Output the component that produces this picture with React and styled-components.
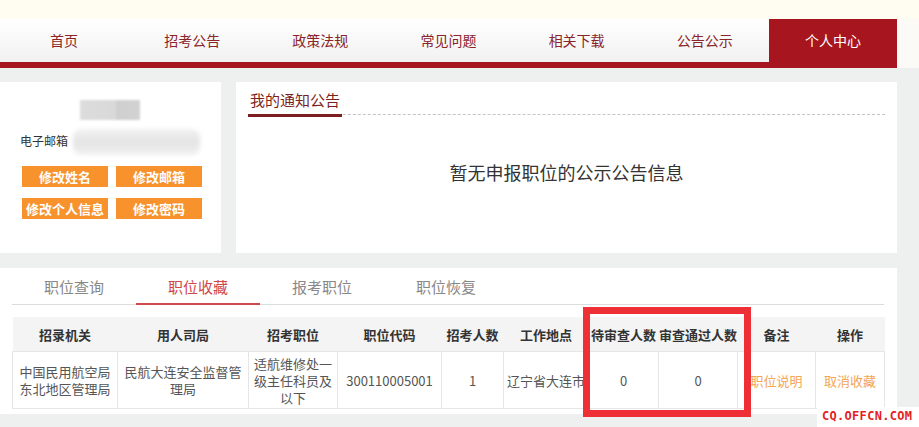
import React from 'react';
import styled, { createGlobalStyle } from 'styled-components';

const GlobalStyle = createGlobalStyle`
    html, body {
        margin: 0;
        padding: 0;
        background: #eeefef;
    }
    body {
        font-family: "Noto Sans CJK SC", "Noto Sans", sans-serif;
    }
`

const Page = styled.div`
    position: relative;
    width: 919px;
    height: 427px;
    overflow: hidden;
    background: #eeefef;
`

const TopStrip = styled.div`
    height: 19px;
    background: #fffcf1;
`

const NavRow = styled.div`
    display: flex;
    background: #fbfaf6;
`

const Nav = styled.ul`
    display: flex;
    width: 897px;
    margin: 0;
    padding: 0;
    list-style: none;
    background: linear-gradient(#ffffff, #f1f1f1);
    border-bottom: 6px solid #a7161e;
`

const NavItem = styled.li`
    flex: 1;
    height: 43px;
    line-height: 43px;
    text-align: center;
    font-size: 14px;
    color: ${p => p.active ? '#ffffff' : '#8a2428'};
    background: ${p => p.active ? '#a7161e' : 'transparent'};
`

const Main = styled.div`
    width: 897px;
    padding-top: 14px;
`

const TopSection = styled.div`
    display: flex;
    gap: 15px;
    height: 171px;
`

const ProfileCard = styled.div`
    width: 221px;
    background: #fff;
    padding: 18px 0 0 20px;
    box-sizing: border-box;
`

const BlurName = styled.div`
    width: 60px;
    height: 20px;
    margin-left: 60px;
    background: linear-gradient(90deg, #dcdcdc 0%, #d9d9d9 60%, #cfcfcf 60%, #d2d2d2 100%);
    filter: blur(1px);
`

const EmailRow = styled.div`
    display: flex;
    align-items: center;
    height: 32px;
    margin-top: 6px;
`

const Label = styled.span`
    font-size: 12px;
    color: #333;
    margin-top: -4px;
`

const BlurEmail = styled.div`
    width: 127px;
    height: 26px;
    margin-left: 5px;
    border-radius: 8px;
    background: linear-gradient(#f2f2f2, #e4e4e4 50%, #f1f1f1);
    filter: blur(2px);
`

const ButtonGrid = styled.div`
    display: grid;
    grid-template-columns: 86px 86px;
    column-gap: 8px;
    row-gap: 11px;
    margin: 8px 0 0 2px;
`

const OrangeButton = styled.div`
    height: 21px;
    line-height: 21px;
    background: #f7922c;
    color: #fff;
    font-size: 13px;
    font-weight: bold;
    text-align: center;
`

const NoticeCard = styled.div`
    flex: 1;
    background: #fff;
    padding: 0 12px;
`

const NoticeHeader = styled.div`
    border-bottom: 1px dashed #c4c4c4;
    height: 32px;
`

const NoticeTitle = styled.span`
    display: inline-block;
    padding: 7px 2px 0 2px;
    height: 25px;
    font-size: 15px;
    color: #7d1f22;
    border-bottom: 3px solid #7d1f22;
`

const EmptyMessage = styled.div`
    margin-top: 45px;
    text-align: center;
    font-size: 18px;
    line-height: 24px;
    color: #333;
`

const BottomPanel = styled.div`
    position: relative;
    margin-top: 15px;
    background: #fff;
    padding: 0 13px 0 12px;
    height: 146px;
`

const Tabs = styled.div`
    display: flex;
    border-bottom: 1px solid #dcdcdc;
`

const Tab = styled.div`
    width: 124px;
    height: 37px;
    line-height: 37px;
    text-align: center;
    font-size: 15px;
    color: ${p => p.active ? '#d0484a' : '#888'};
    border-bottom: 2px solid ${p => p.active ? '#d0484a' : 'transparent'};
    margin-bottom: -1px;
    box-sizing: border-box;
`

const Table = styled.table`
    margin-top: 12px;
    width: 871px;
    table-layout: fixed;
    border-collapse: collapse;
    font-size: 13px;
`

const Th = styled.th`
    height: 34px;
    padding: 0;
    background: #f4f4f4;
    color: #333;
    font-weight: bold;
    white-space: nowrap;
    overflow: visible;
`

const Td = styled.td`
    height: 56px;
    padding: 0 3px;
    border: 1px solid #e6e6e6;
    text-align: ${p => p.left ? 'left' : 'center'};
    line-height: 17px;
    color: ${p => p.link ? '#f3a655' : '#555'};
    white-space: ${p => p.nowrap ? 'nowrap' : 'normal'};
    overflow: hidden;
`

const Highlight = styled.div`
    position: absolute;
    left: 583px;
    top: 39px;
    width: 168px;
    height: 110px;
    border: 7px solid #ee3036;
    box-sizing: border-box;
`

const Watermark = styled.div`
    position: absolute;
    right: 0;
    bottom: 0;
    width: 102px;
    height: 20px;
    background: #fff;
    color: #e31e24;
    font-family: "DejaVu Sans Mono", monospace;
    font-weight: bold;
    font-size: 12px;
    line-height: 18px;
    padding-left: 5px;
    box-sizing: border-box;
    letter-spacing: 0.3px;
`

const navItems = ['首页', '招考公告', '政策法规', '常见问题', '相关下载', '公告公示', '个人中心'];
const tabs = ['职位查询', '职位收藏', '报考职位', '职位恢复'];
const columns = [
    { title: '招录机关', width: 105 },
    { title: '用人司局', width: 131 },
    { title: '招考职位', width: 89 },
    { title: '职位代码', width: 104 },
    { title: '招考人数', width: 62 },
    { title: '工作地点', width: 85 },
    { title: '待审查人数', width: 70 },
    { title: '审查通过人数', width: 79 },
    { title: '备注', width: 78 },
    { title: '操作', width: 69 },
];

function App() {
    return (
        <Page>
            <GlobalStyle />
            <TopStrip />
            <NavRow>
                <Nav>
                    {navItems.map((item, i) => (
                        <NavItem key={item} active={i === navItems.length - 1}>{item}</NavItem>
                    ))}
                </Nav>
            </NavRow>
            <Main>
                <TopSection>
                    <ProfileCard>
                        <BlurName />
                        <EmailRow>
                            <Label>电子邮箱</Label>
                            <BlurEmail />
                        </EmailRow>
                        <ButtonGrid>
                            <OrangeButton>修改姓名</OrangeButton>
                            <OrangeButton>修改邮箱</OrangeButton>
                            <OrangeButton>修改个人信息</OrangeButton>
                            <OrangeButton>修改密码</OrangeButton>
                        </ButtonGrid>
                    </ProfileCard>
                    <NoticeCard>
                        <NoticeHeader>
                            <NoticeTitle>我的通知公告</NoticeTitle>
                        </NoticeHeader>
                        <EmptyMessage>暂无申报职位的公示公告信息</EmptyMessage>
                    </NoticeCard>
                </TopSection>
                <BottomPanel>
                    <Tabs>
                        {tabs.map((t, i) => (
                            <Tab key={t} active={i === 1}>{t}</Tab>
                        ))}
                    </Tabs>
                    <Table>
                        <colgroup>
                            {columns.map(c => <col key={c.title} style={{ width: c.width }} />)}
                        </colgroup>
                        <thead>
                            <tr>
                                {columns.map(c => <Th key={c.title}>{c.title}</Th>)}
                            </tr>
                        </thead>
                        <tbody>
                            <tr>
                                <Td>中国民用航空局东北地区管理局</Td>
                                <Td>民航大连安全监督管理局</Td>
                                <Td>适航维修处一级主任科员及以下</Td>
                                <Td>300110005001</Td>
                                <Td>1</Td>
                                <Td nowrap left>辽宁省大连市</Td>
                                <Td>0</Td>
                                <Td>0</Td>
                                <Td link nowrap>职位说明</Td>
                                <Td link nowrap>取消收藏</Td>
                            </tr>
                        </tbody>
                    </Table>
                    <Highlight />
                </BottomPanel>
            </Main>
            <Watermark>CQ.OFFCN.COM</Watermark>
        </Page>
    );
}

export default App;
